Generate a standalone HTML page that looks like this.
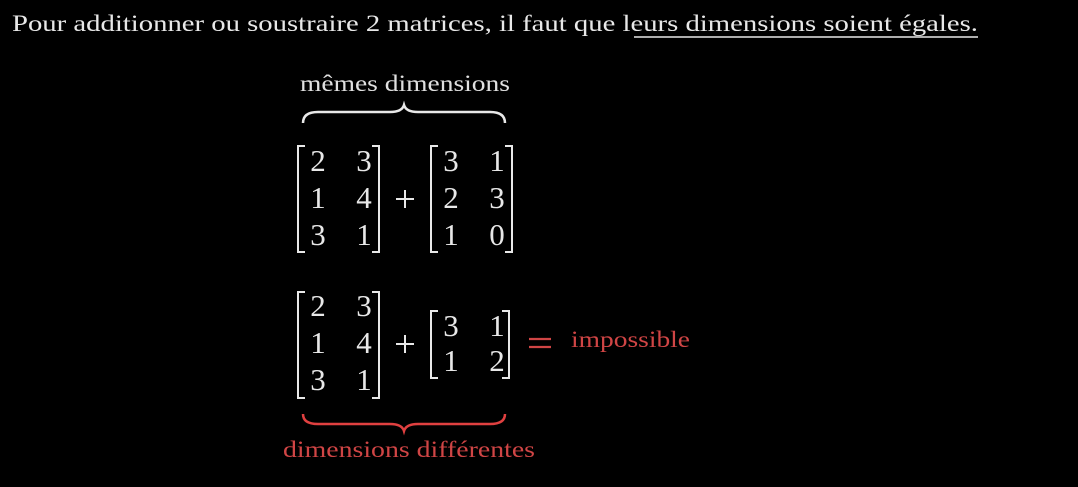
<!DOCTYPE html>
<html><head><style>
html,body{margin:0;padding:0;background:#000;width:1078px;height:487px;overflow:hidden}
svg text{font-family:"Liberation Serif","DejaVu Serif",serif}
</style></head><body>
<svg width="1078" height="487" viewBox="0 0 1078 487" xmlns="http://www.w3.org/2000/svg">
<rect width="1078" height="487" fill="#000"/>
<text x="12" y="31" font-size="23" fill="#e8e8e8" textLength="966" lengthAdjust="spacingAndGlyphs">Pour additionner ou soustraire 2 matrices, il faut que <tspan>leurs dimensions soient égales.</tspan></text>
<line x1="634" y1="37" x2="978" y2="37" stroke="#e8e8e8" stroke-width="1.5"/>
<text x="300" y="91" font-size="23" fill="#e0e0e0" textLength="210" lengthAdjust="spacingAndGlyphs">mêmes dimensions</text>
<path d="M303 123 Q303 112 318 112 L390 112 Q402 112 404 105 Q406 112 418 112 L490 112 Q505 112 505 123" fill="none" stroke="#e8e8e8" stroke-width="2.5"/>
<g fill="none" stroke="#e8e8e8" stroke-width="2">
<path d="M305 146 H298 V252 H305"/><path d="M372 146 H379 V252 H372"/>
<path d="M438 146 H431 V252 H438"/><path d="M505 146 H512 V252 H505"/>
<path d="M305 292 H298 V398 H305"/><path d="M372 292 H379 V398 H372"/>
<path d="M438 311 H431 V378 H438"/><path d="M502 311 H509 V378 H502"/>
</g>
<g fill="#e8e8e8" font-size="31" text-anchor="middle">
<text x="318" y="171">2</text><text x="364" y="171">3</text>
<text x="318" y="208">1</text><text x="364" y="208">4</text>
<text x="318" y="245">3</text><text x="364" y="245">1</text>
<text x="451" y="171">3</text><text x="497" y="171">1</text>
<text x="451" y="208">2</text><text x="497" y="208">3</text>
<text x="451" y="245">1</text><text x="497" y="245">0</text>
<text x="318" y="316">2</text><text x="364" y="316">3</text>
<text x="318" y="353">1</text><text x="364" y="353">4</text>
<text x="318" y="390">3</text><text x="364" y="390">1</text>
<text x="451" y="336">3</text><text x="497" y="336">1</text>
<text x="451" y="371">1</text><text x="497" y="371">2</text>
</g>
<g stroke="#e8e8e8" stroke-width="2">
<path d="M396 199 H414 M405 190 V208"/>
<path d="M396 344 H414 M405 335 V353"/>
</g>
<path d="M529 339 H551 M529 347 H551" stroke="#d04545" stroke-width="2.2"/>
<g fill="#d04545">
<text x="571" y="347" font-size="23" textLength="119" lengthAdjust="spacingAndGlyphs">impossible</text>
<text x="283" y="457" font-size="23" textLength="252" lengthAdjust="spacingAndGlyphs">dimensions différentes</text>
</g>
<path d="M303 414 Q303 424 318 424 L390 424 Q402 424 404 431 Q406 424 418 424 L490 424 Q505 424 505 414" fill="none" stroke="#e04040" stroke-width="2.5"/>
</svg>
</body></html>
